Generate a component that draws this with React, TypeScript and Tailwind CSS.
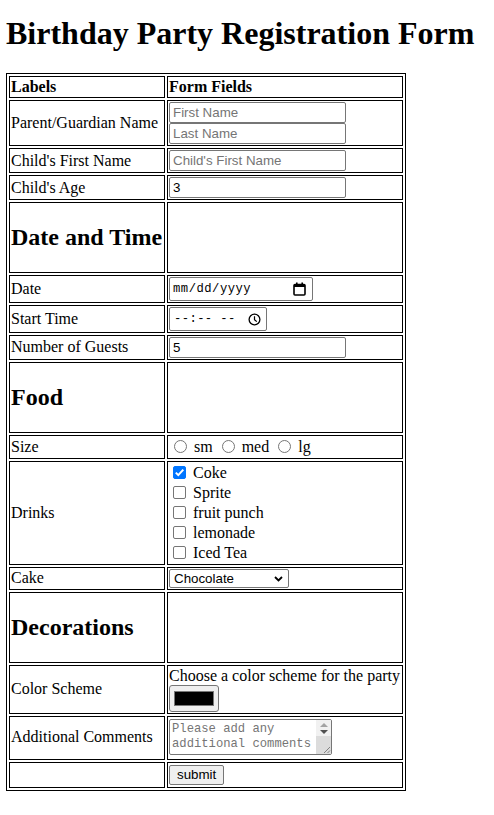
import { useState } from 'react';

const serif = "font-['Liberation_Serif','Times_New_Roman',serif]";
const sans = "font-['Liberation_Sans',Arial,sans-serif]";
const mono = "font-['Liberation_Mono','Courier_New',monospace]";

const cell = 'border border-black p-[1px] align-middle';
const textInput = `block w-[177px] h-[21px] border border-[#767676] rounded-[2px] px-[3px] text-[13.33px] text-black placeholder:text-[#757575] ${sans} outline-none`;

function SectionRow({ title }: { title: string }) {
	return (
		<tr>
			<td className={cell}>
				<h2 className="text-[24px] font-bold leading-[27px] my-[19.92px] whitespace-nowrap">{title}</h2>
			</td>
			<td className={cell}></td>
		</tr>
	);
}

function Check({ label, checked }: { label: string; checked?: boolean }) {
	const [on, setOn] = useState(!!checked);
	return (
		<label className="flex items-center h-[20px]">
			<span className="relative ml-[4px] w-[13px] h-[13px]">
				<input
					type="checkbox"
					checked={on}
					onChange={() => setOn(!on)}
					className="appearance-none block w-[13px] h-[13px] border border-[#767676] rounded-[2px] bg-white checked:bg-[#0075ff] checked:border-[#0075ff]"
				/>
				{on && (
					<svg className="absolute inset-0 pointer-events-none" width="13" height="13" viewBox="0 0 13 13">
						<path d="M2.8 6.6 L5.3 9.1 L10.3 3.6" fill="none" stroke="white" strokeWidth="2" />
					</svg>
				)}
			</span>
			<span className="ml-[7px]">{label}</span>
		</label>
	);
}

function Radio({ value }: { value: string }) {
	return (
		<>
			<input
				type="radio"
				name="size"
				value={value}
				className="appearance-none inline-block align-[-1px] ml-[5px] mr-[3px] w-[13px] h-[13px] border border-[#767676] rounded-full bg-white checked:border-[4px] checked:border-[#0075ff]"
			/>{' '}
			{value}{' '}
		</>
	);
}

export default function App() {
	const [cake, setCake] = useState('Chocolate');

	return (
		<div className={`bg-white text-black min-h-[815px] px-[6px] text-[16px] ${serif}`}>
			<h1 className="text-[32px] font-bold leading-[36.8px] pt-[15px] mb-[21px]">Birthday Party Registration Form</h1>
			<form onSubmit={(e) => e.preventDefault()}>
				<table className="table-fixed w-[400px] border border-black border-separate border-spacing-[2px] leading-[18.4px]">
					<tbody>
						<tr>
							<th className={`${cell} w-[156px] text-left`}>Labels</th>
							<th className={`${cell} text-left`}>Form Fields</th>
						</tr>
						<tr>
							<td className={cell}>Parent/Guardian Name</td>
							<td className={cell}>
								<input type="text" placeholder="First Name" className={textInput} />
								<input type="text" placeholder="Last Name" className={textInput} />
							</td>
						</tr>
						<tr>
							<td className={cell}>Child's First Name</td>
							<td className={cell}>
								<input type="text" placeholder="Child's First Name" className={textInput} />
							</td>
						</tr>
						<tr>
							<td className={cell}>Child's Age</td>
							<td className={cell}>
								<input type="number" defaultValue={3} className={textInput} />
							</td>
						</tr>

						<SectionRow title="Date and Time" />
						<tr>
							<td className={cell}>Date</td>
							<td className={cell}>
								<div className={`flex items-center w-[144px] h-[24px] border border-[#767676] rounded-[2px] pl-[3px] pr-[6px] text-[12.2px] ${mono}`}>
									<span className="flex-1 tracking-[0.5px]">mm/dd/yyyy</span>
									<svg width="13" height="14" viewBox="0 0 13 14">
										<rect x="1" y="2.5" width="11" height="10.5" rx="1" fill="none" stroke="black" strokeWidth="1.6" />
										<rect x="1" y="2.5" width="11" height="2.5" fill="black" />
										<rect x="3" y="0.5" width="1.6" height="3" fill="black" />
										<rect x="8.4" y="0.5" width="1.6" height="3" fill="black" />
									</svg>
								</div>
							</td>
						</tr>
						<tr>
							<td className={cell}>Start Time</td>
							<td className={cell}>
								<div className={`flex items-center w-[98px] h-[24px] border border-[#767676] rounded-[2px] pl-[4px] pr-[5px] text-[12.2px] ${mono}`}>
									<span className="flex-1 whitespace-pre tracking-[0.4px]">--:-- --</span>
									<svg width="13" height="13" viewBox="0 0 13 13">
										<circle cx="6.5" cy="6.5" r="5.4" fill="none" stroke="black" strokeWidth="1.3" />
										<path d="M6.5 3.2 V6.8 L8.8 8.6" fill="none" stroke="black" strokeWidth="1.2" />
									</svg>
								</div>
							</td>
						</tr>
						<tr>
							<td className={cell}>Number of Guests</td>
							<td className={cell}>
								<input type="number" defaultValue={5} className={textInput} />
							</td>
						</tr>

						<SectionRow title="Food" />
						<tr>
							<td className={cell}>Size</td>
							<td className={`${cell} h-[24px]`}>
								<div className="whitespace-nowrap pt-[1px]">
									<Radio value="sm" />
									<Radio value="med" />
									<Radio value="lg" />
								</div>
							</td>
						</tr>
						<tr>
							<td className={cell}>Drinks</td>
							<td className={cell}>
								<Check label="Coke" checked />
								<Check label="Sprite" />
								<Check label="fruit punch" />
								<Check label="lemonade" />
								<Check label="Iced Tea" />
							</td>
						</tr>
						<tr>
							<td className={cell}>Cake</td>
							<td className={cell}>
								<div className="relative w-[120px] h-[19px]">
									<select
										value={cake}
										onChange={(e) => setCake(e.target.value)}
										className={`appearance-none block w-[120px] h-[19px] border border-[#767676] rounded-[2px] pl-[4px] text-[13.33px] bg-white ${sans}`}
									>
										<option>Chocolate</option>
										<option>Vanilla</option>
										<option>Strawberry</option>
									</select>
									<svg className="absolute right-[6px] top-[7px] pointer-events-none" width="9" height="6" viewBox="0 0 9 6">
										<path d="M1 1 L4.5 4.5 L8 1" fill="none" stroke="black" strokeWidth="1.8" />
									</svg>
								</div>
							</td>
						</tr>

						<SectionRow title="Decorations" />
						<tr>
							<td className={cell}>Color Scheme</td>
							<td className={cell}>
								<div className="whitespace-nowrap leading-[18px]">Choose a color scheme for the party</div>
								<div className="flex items-center justify-center w-[50px] h-[27px] border border-[#767676] rounded-[3px] bg-[#efefef]">
									<div className="w-[40px] h-[15px] bg-black border border-[#777]"></div>
								</div>
							</td>
						</tr>
						<tr>
							<td className={cell}>Additional Comments</td>
							<td className={cell}>
								<div className="flex w-[163px] h-[36px] border border-[#767676] rounded-[2px] mb-[3px] mt-[1px] overflow-hidden">
									<textarea
										placeholder="Please add any additional comments"
										className={`flex-1 min-w-0 resize-none outline-none px-[2px] pt-[2px] text-[12.2px] leading-[15px] placeholder:text-[#757575] overflow-hidden ${mono}`}
									/>
									<div className="w-[15px] flex flex-col bg-[#f1f1f1]">
										<div className="flex flex-col items-center pt-[3px] gap-[3px]">
											<svg width="8" height="4" viewBox="0 0 8 4">
												<path d="M0 4 L4 0 L8 4 Z" fill="#a3a3a3" />
											</svg>
											<svg width="8" height="4" viewBox="0 0 8 4">
												<path d="M0 0 L4 4 L8 0 Z" fill="#505050" />
											</svg>
										</div>
										<div className="flex-1 bg-[#dcdcdc] mt-[2px] flex items-end justify-end">
											<svg width="8" height="8" viewBox="0 0 8 8">
												<path d="M7 1 L1 7 M7 4.5 L4.5 7" stroke="#777" strokeWidth="0.9" />
											</svg>
										</div>
									</div>
								</div>
							</td>
						</tr>
						<tr>
							<td className={cell}></td>
							<td className={cell}>
								<button
									type="submit"
									className={`block my-[1px] h-[20px] px-[7px] border border-[#767676] rounded-[2px] bg-[#efefef] text-[13.33px] leading-[16px] ${sans}`}
								>
									submit
								</button>
							</td>
						</tr>
					</tbody>
				</table>
			</form>
		</div>
	);
}
